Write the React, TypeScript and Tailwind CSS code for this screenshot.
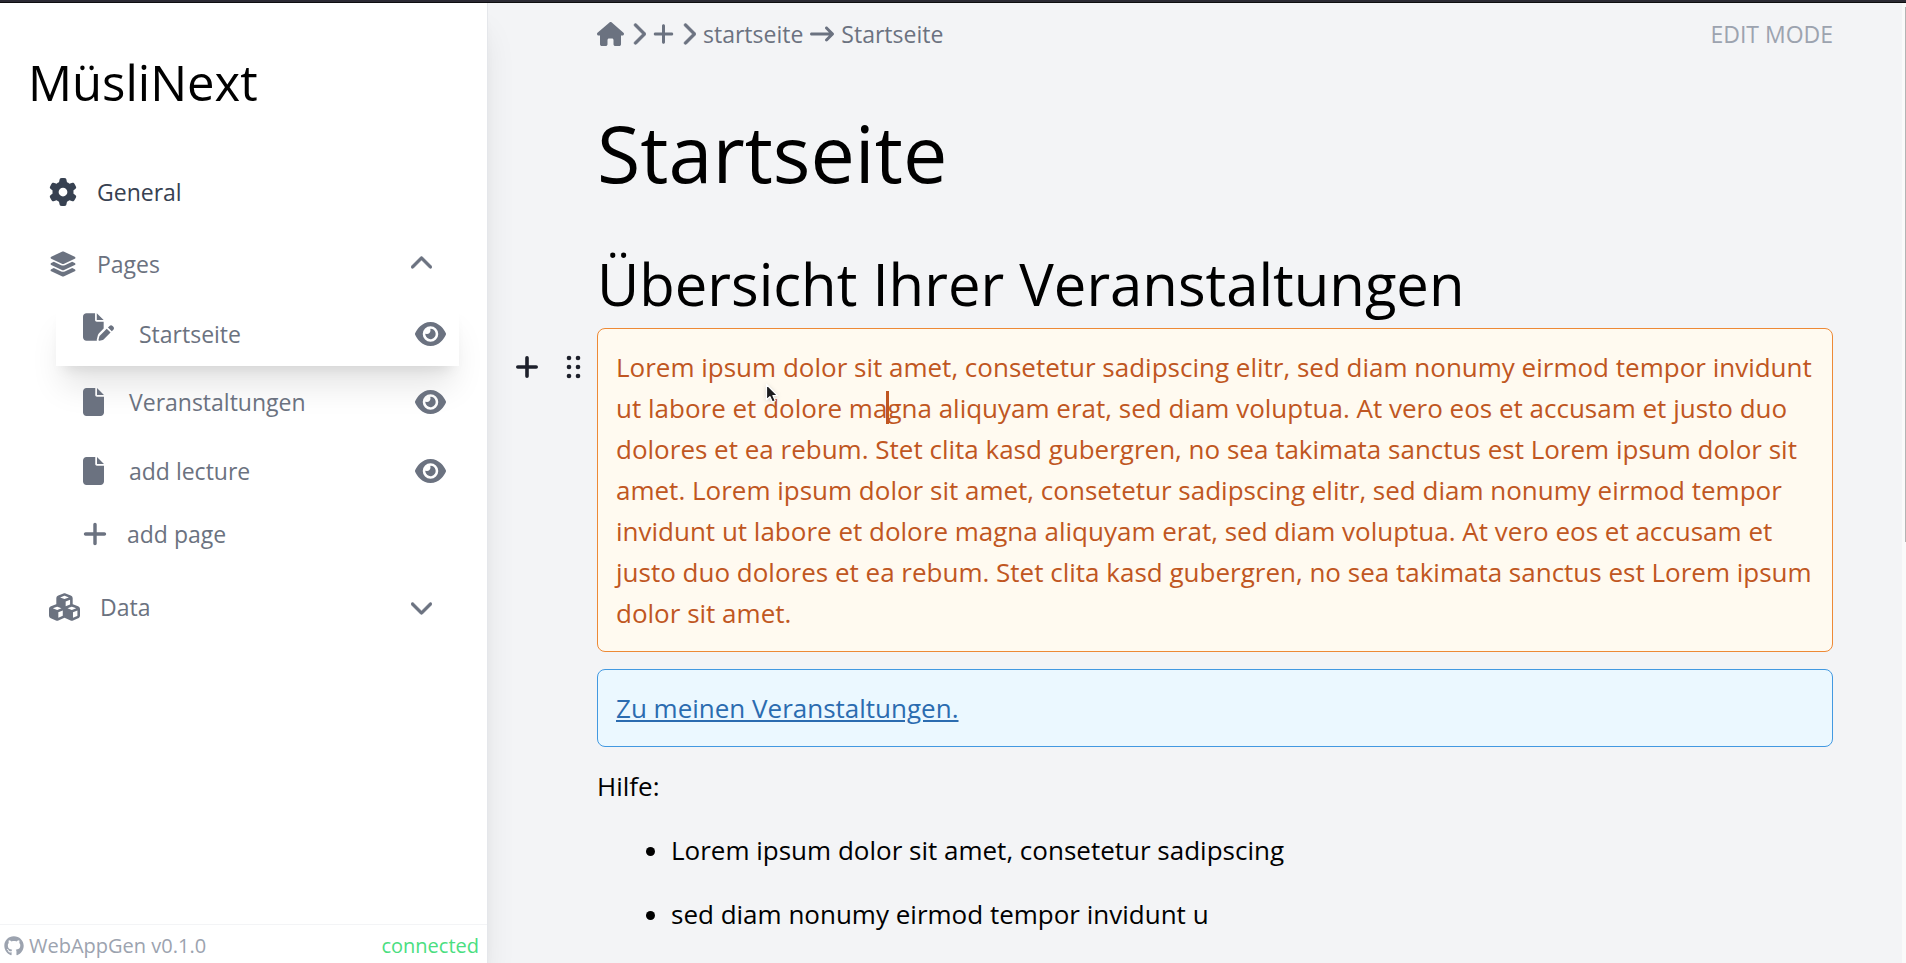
import type { ReactNode } from "react";
import {
  FaArrowRightLong,
  FaCubes,
  FaEye,
  FaFile,
  FaFilePen,
  FaGear,
  FaGithub,
  FaHouse,
  FaLayerGroup,
  FaPlus,
} from "react-icons/fa6";

const loremText =
  "Lorem ipsum dolor sit amet, consetetur sadipscing elitr, sed diam nonumy eirmod tempor invidunt ut labore et dolore magna aliquyam erat, sed diam voluptua. At vero eos et accusam et justo duo dolores et ea rebum. Stet clita kasd gubergren, no sea takimata sanctus est Lorem ipsum dolor sit amet. Lorem ipsum dolor sit amet, consetetur sadipscing elitr, sed diam nonumy eirmod tempor invidunt ut labore et dolore magna aliquyam erat, sed diam voluptua. At vero eos et accusam et justo duo dolores et ea rebum. Stet clita kasd gubergren, no sea takimata sanctus est Lorem ipsum dolor sit amet.";

const chevrons = {
  up: {
    viewBox: "0 0 448 512",
    d: "M416 352c-8.188 0-16.38-3.125-22.62-9.375L224 173.3l-169.4 169.4c-12.5 12.5-32.75 12.5-45.25 0s-12.5-32.75 0-45.25l192-192c12.5-12.5 32.75-12.5 45.25 0l192 192c12.5 12.5 12.5 32.75 0 45.25C432.4 348.9 424.2 352 416 352z",
  },
  down: {
    viewBox: "0 0 448 512",
    d: "M224 416c-8.188 0-16.38-3.125-22.62-9.375l-192-192c-12.5-12.5-12.5-32.75 0-45.25s32.75-12.5 45.25 0L224 338.8l169.4-169.4c12.5-12.5 32.75-12.5 45.25 0s12.5 32.75 0 45.25l-192 192C240.4 412.9 232.2 416 224 416z",
  },
  right: {
    viewBox: "0 0 320 512",
    d: "M96 480c-8.188 0-16.38-3.125-22.62-9.375c-12.5-12.5-12.5-32.75 0-45.25L242.8 256L73.38 86.63c-12.5-12.5-12.5-32.75 0-45.25s32.75-12.5 45.25 0l192 192c12.5 12.5 12.5 32.75 0 45.25l-192 192C112.4 476.9 104.2 480 96 480z",
  },
};

function Chevron({ dir }: { dir: keyof typeof chevrons }) {
  const { viewBox, d } = chevrons[dir];
  return (
    <svg
      viewBox={viewBox}
      className="h-6 w-auto shrink-0"
      fill="currentColor"
      stroke="currentColor"
      strokeWidth="10"
      aria-hidden="true"
    >
      <path d={d} />
    </svg>
  );
}

function SectionButton({
  icon,
  label,
  dir,
}: {
  icon: ReactNode;
  label: string;
  dir: "up" | "down";
}) {
  return (
    <button
      type="button"
      aria-expanded={dir === "up"}
      className="flex h-[72px] w-full items-center gap-5 pr-[55px] pl-[49px] text-left"
    >
      {icon}
      <span className="flex-1">{label}</span>
      <Chevron dir={dir} />
    </button>
  );
}

function EyeButton({ label }: { label: string }) {
  return (
    <button type="button" aria-label={`Toggle ${label}`}>
      <FaEye className="h-7 w-[31px]" />
    </button>
  );
}

function PageRow({ label }: { label: string }) {
  return (
    <li className="flex h-[69px] items-center pr-[13px] pl-[27px]">
      <a href="#page" className="flex flex-1 items-center gap-[25px]">
        <FaFile className="h-7 w-[21px] shrink-0" />
        {label}
      </a>
      <EyeButton label={label} />
    </li>
  );
}

function Sidebar() {
  return (
    <aside className="z-10 flex w-[488px] shrink-0 flex-col border-r border-gray-200 bg-white shadow-[0_26px_32px_-6px_rgba(0,0,0,0.1),0_10px_13px_-8px_rgba(0,0,0,0.1)]">
      <div className="mt-[49px] mb-11 pl-7 text-[49px] leading-[60px]">MüsliNext</div>
      <nav className="flex-1 text-[23px] leading-8 text-[#6b7280]">
        <a href="#general" className="flex h-[72px] items-center gap-5 pl-[49px] text-[#374151]">
          <FaGear className="size-7 shrink-0" />
          General
        </a>
        <SectionButton icon={<FaLayerGroup className="size-7 shrink-0" />} label="Pages" dir="up" />
        <ul className="mr-[28px] ml-[56px] pb-2">
          <li className="mt-0.5 mb-px flex h-16 items-center bg-white pr-[13px] pl-[27px] shadow-[0_26px_32px_-6px_rgba(0,0,0,0.1),0_10px_13px_-8px_rgba(0,0,0,0.1)]">
            <a href="#startseite" className="flex flex-1 items-center gap-[25px]">
              <FaFilePen className="mb-3.5 h-7 w-[31px] shrink-0" />
              Startseite
            </a>
            <EyeButton label="Startseite" />
          </li>
          <PageRow label="Veranstaltungen" />
          <PageRow label="add lecture" />
          <li className="pl-[27px]">
            <button type="button" className="flex h-[58px] items-center gap-5">
              <FaPlus className="h-7 w-6 shrink-0" />
              add page
            </button>
          </li>
        </ul>
        <SectionButton icon={<FaCubes className="h-7 w-[31px] shrink-0" />} label="Data" dir="down" />
      </nav>
      <footer className="flex items-center justify-between border-t border-gray-100 pt-1.5 pr-2 pb-0.5 pl-1 text-[20px] leading-[30px] text-[#9ca3af]">
        <a href="#source" className="flex items-center gap-[5px]">
          <FaGithub className="size-5" />
          WebAppGen v0.1.0
        </a>
        <span className="text-[#4ade80]">connected</span>
      </footer>
    </aside>
  );
}

function Breadcrumbs() {
  return (
    <div className="flex items-center justify-between text-[23px] leading-[34px] text-[#6b7280]">
      <nav aria-label="Breadcrumb" className="flex items-center gap-[7px]">
        <a href="#home" aria-label="Home">
          <FaHouse className="h-6 w-[27px]" />
        </a>
        <Chevron dir="right" />
        <button type="button" aria-label="Add">
          <FaPlus className="h-6 w-[21px]" />
        </button>
        <Chevron dir="right" />
        <a href="#startseite">startseite</a>
        <FaArrowRightLong className="size-6" />
        <span>Startseite</span>
      </nav>
      <span className="text-[#9ca3af]">EDIT MODE</span>
    </div>
  );
}

function BlockTools() {
  return (
    <div className="absolute top-6 right-full flex items-center gap-[21px] pr-3 text-[#1d202b]">
      <button type="button" aria-label="Add block">
        <svg
          viewBox="0 0 30 30"
          className="size-[30px]"
          fill="none"
          stroke="currentColor"
          strokeWidth="3.6"
          strokeLinecap="round"
          aria-hidden="true"
        >
          <path d="M15 5.8v18.4M5.8 15h18.4" />
        </svg>
      </button>
      <button type="button" aria-label="Move block">
        <svg viewBox="0 0 22 30" className="h-[30px] w-[22px]" fill="currentColor" aria-hidden="true">
          <circle cx="6" cy="6" r="2.3" />
          <circle cx="15" cy="6" r="2.3" />
          <circle cx="6" cy="15" r="2.3" />
          <circle cx="15" cy="15" r="2.3" />
          <circle cx="6" cy="24" r="2.3" />
          <circle cx="15" cy="24" r="2.3" />
        </svg>
      </button>
    </div>
  );
}

function Pointer() {
  return (
    <svg viewBox="0 0 16 22" className="absolute top-[55px] left-[168px] h-[22px] w-4 drop-shadow-sm" aria-hidden="true">
      <path
        d="M1.5 1.5v15.2l3.4-3.1 2.4 5.4 3-1.3-2.4-5.2h4.6z"
        fill="#1c1c1e"
        stroke="#ffffff"
        strokeWidth="1.2"
        strokeLinejoin="round"
      />
    </svg>
  );
}

export default function App() {
  return (
    <div className="flex h-screen flex-col overflow-hidden bg-gray-100 font-['Open_Sans','Noto_Sans',sans-serif] text-black">
      <div className="h-[3px] shrink-0 border-b border-[#0e0e10] bg-[#2b2a33]" />
      <div className="flex min-h-0 flex-1">
        <Sidebar />
        <main className="min-w-0 flex-1 overflow-hidden pt-3.5 pr-[69px] pl-[109px] text-[26px] leading-[41px]">
          <Breadcrumbs />
          <h1 className="mt-[59px] text-[79px] leading-[86px]">Startseite</h1>
          <h2 className="mt-14 text-[58px] leading-[64px]">Übersicht Ihrer Veranstaltungen</h2>
          <div className="relative mt-3">
            <BlockTools />
            <p className="rounded-lg border border-[#ed8936] bg-[#fffaf0] px-[18px] pt-[18px] pb-[17px] text-[#c05621]">
              {loremText}
            </p>
            <span className="absolute top-[63px] left-[289px] h-[33px] w-[3px] bg-[#c05621]" />
            <Pointer />
          </div>
          <p className="mt-[17px] rounded-lg border border-[#4299e1] bg-[#ebf8ff] px-[18px] pt-[18px] pb-[17px] text-[#2b6cb0]">
            <a href="#veranstaltungen" className="underline">
              Zu meinen Veranstaltungen.
            </a>
          </p>
          <p className="mt-[19px]">Hilfe:</p>
          <ul className="mt-[23px] list-disc space-y-[23px] pl-[74px]">
            <li>Lorem ipsum dolor sit amet, consetetur sadipscing</li>
            <li>sed diam nonumy eirmod tempor invidunt u</li>
          </ul>
        </main>
        <div className="flex w-1 shrink-0 flex-col items-end bg-[#fafafa] pt-1">
          <div className="h-[56%] w-px bg-[#b4b4b4]" />
        </div>
      </div>
    </div>
  );
}
